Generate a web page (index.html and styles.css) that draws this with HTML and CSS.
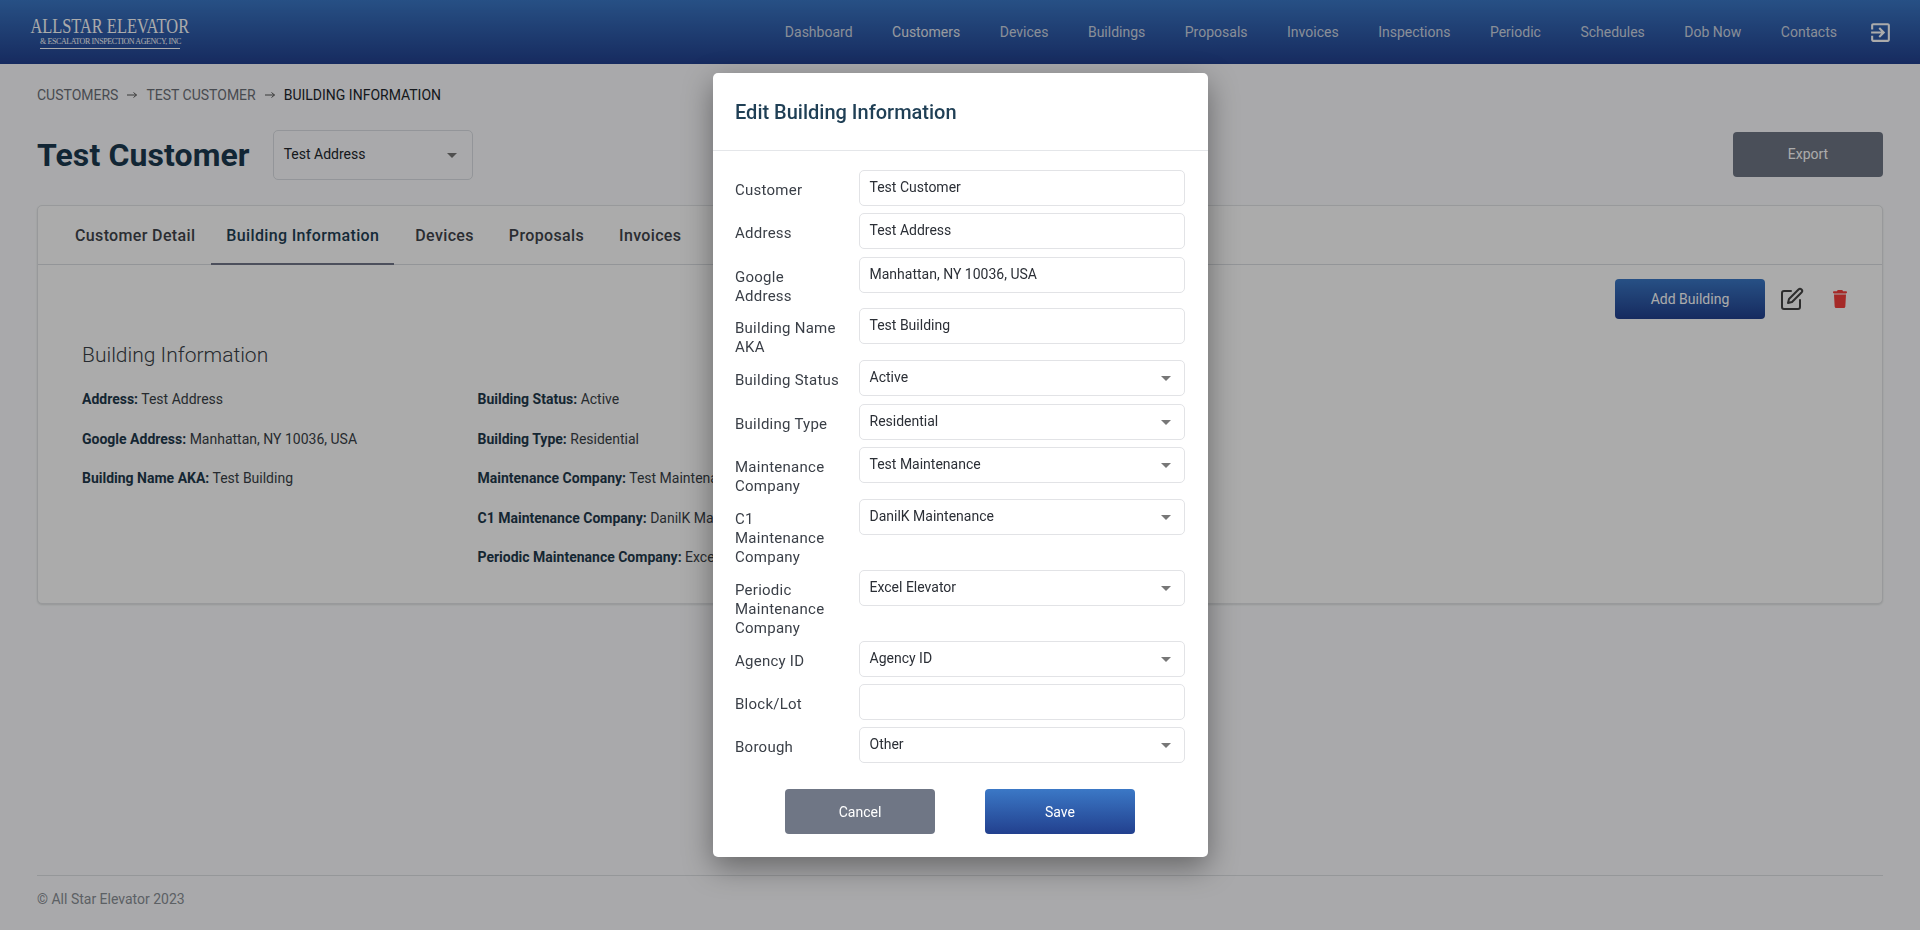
FILE: index.html
```html
<!DOCTYPE html>
<html lang="en">
<head>
    <meta charset="UTF-8">
    <title>Edit Building Information</title>
    <link rel="stylesheet" href="styles.css">
</head>
<body>
    <div class="page">
        <header class="topbar">
            <a class="logo">
                <span class="logo-main">ALLSTAR ELEVATOR</span>
                <span class="logo-sub">&amp; ESCALATOR INSPECTION AGENCY, INC</span>
            </a>
            <nav class="nav">
                <a>Dashboard</a>
                <a class="active">Customers</a>
                <a>Devices</a>
                <a>Buildings</a>
                <a>Proposals</a>
                <a>Invoices</a>
                <a>Inspections</a>
                <a>Periodic</a>
                <a>Schedules</a>
                <a>Dob Now</a>
                <a>Contacts</a>
                <svg class="logout" viewBox="0 0 24 24"><path d="M10.09 15.59L11.5 17l5-5-5-5-1.41 1.41L12.67 11H3v2h9.67l-2.58 2.59zM19 3H5c-1.11 0-2 .9-2 2v4h2V5h14v14H5v-4H3v4c0 1.1.89 2 2 2h14c1.1 0 2-.9 2-2V5c0-1.1-.9-2-2-2z"/></svg>
            </nav>
        </header>

        <main class="content">
            <div class="crumbs">
                <span>Customers</span>
                <svg class="crumb-arrow" viewBox="0 0 10 10"><path d="M0 5H9.5M6.5 2.5L9.5 5L6.5 7.5"/></svg>
                <span>Test Customer</span>
                <svg class="crumb-arrow" viewBox="0 0 10 10"><path d="M0 5H9.5M6.5 2.5L9.5 5L6.5 7.5"/></svg>
                <span class="current">Building Information</span>
            </div>
            <div class="title-row">
                <h1>Test Customer</h1>
                <div class="picker">Test Address<b class="caret"></b></div>
                <button class="btn btn-grey btn-export">Export</button>
            </div>
            <section class="card">
                <div class="tabs">
                    <a>Customer Detail</a>
                    <a class="active">Building Information</a>
                    <a>Devices</a>
                    <a>Proposals</a>
                    <a>Invoices</a>
                </div>
                <div class="card-body">
                    <div class="actions">
                        <button class="btn btn-blue btn-add">Add Building</button>
                        <svg class="icon-edit" viewBox="0 0 24 24"><path d="M11 4H4a2 2 0 0 0-2 2v14a2 2 0 0 0 2 2h14a2 2 0 0 0 2-2v-7"/><path d="M18.5 2.5a2.12 2.12 0 0 1 3 3L12 15l-4 1 1-4 9.5-9.5z"/></svg>
                        <svg class="icon-trash" viewBox="0 0 448 512" preserveAspectRatio="none"><path d="M135.2 17.7L128 32H32C14.3 32 0 46.3 0 64S14.3 96 32 96H416c17.7 0 32-14.3 32-32s-14.3-32-32-32H320l-7.2-14.3C307.4 6.8 296.3 0 284.2 0H163.8c-12.1 0-23.2 6.8-28.6 17.7zM416 128H32L53.2 467c1.6 25.3 22.6 45 47.9 45H346.9c25.3 0 46.3-19.7 47.9-45L416 128z"/></svg>
                    </div>
                    <h2>Building Information</h2>
                    <div class="info">
                        <div class="info-col">
                            <p><b>Address:</b> Test Address</p>
                            <p><b>Google Address:</b> Manhattan, NY 10036, USA</p>
                            <p><b>Building Name AKA:</b> Test Building</p>
                        </div>
                        <div class="info-col">
                            <p><b>Building Status:</b> Active</p>
                            <p><b>Building Type:</b> Residential</p>
                            <p><b>Maintenance Company:</b> Test Maintenance</p>
                            <p><b>C1 Maintenance Company:</b> DanilK Maintenance</p>
                            <p><b>Periodic Maintenance Company:</b> Excel Elevator</p>
                        </div>
                    </div>
                </div>
            </section>
        </main>

        <footer class="footer">© All Star Elevator 2023</footer>
    </div>

    <div class="overlay"></div>

    <div class="modal">
        <div class="modal-title">Edit Building Information</div>
        <form class="modal-form">
            <div class="row"><label>Customer</label><div class="field">Test Customer</div></div>
            <div class="row"><label>Address</label><div class="field">Test Address</div></div>
            <div class="row"><label>Google Address</label><div class="field">Manhattan, NY 10036, USA</div></div>
            <div class="row"><label>Building Name AKA</label><div class="field">Test Building</div></div>
            <div class="row"><label>Building Status</label><div class="field">Active<b class="caret"></b></div></div>
            <div class="row"><label>Building Type</label><div class="field">Residential<b class="caret"></b></div></div>
            <div class="row"><label>Maintenance Company</label><div class="field">Test Maintenance<b class="caret"></b></div></div>
            <div class="row"><label>C1 Maintenance Company</label><div class="field">DanilK Maintenance<b class="caret"></b></div></div>
            <div class="row"><label>Periodic Maintenance Company</label><div class="field">Excel Elevator<b class="caret"></b></div></div>
            <div class="row"><label>Agency ID</label><div class="field">Agency ID<b class="caret"></b></div></div>
            <div class="row"><label>Block/Lot</label><div class="field"></div></div>
            <div class="row"><label>Borough</label><div class="field">Other<b class="caret"></b></div></div>
            <div class="modal-buttons">
                <button type="button" class="btn btn-grey">Cancel</button>
                <button type="button" class="btn btn-blue">Save</button>
            </div>
        </form>
    </div>
</body>
</html>
```

FILE: styles.css
```css
* {
    box-sizing: border-box;
}
body {
    margin: 0;
    background: #fcfdff;
    font-family: Roboto, Arial, sans-serif;
    font-size: 14px;
    color: #3a3f47;
}
p, h1, h2 {
    margin: 0;
}
.page {
    display: flex;
    flex-direction: column;
    height: 930px;
    overflow: hidden;
}

/* top bar */
.topbar {
    height: 64px;
    flex: none;
    display: flex;
    align-items: center;
    justify-content: space-between;
    padding: 0 27px 0 31px;
    background: linear-gradient(180deg, #3b78c6 0%, #22408e 100%);
}
.logo {
    display: flex;
    flex-direction: column;
    align-items: center;
    width: 158px;
    font-family: "Liberation Serif", serif;
    color: #fff;
    white-space: nowrap;
    margin-top: 0;
}
.logo-main {
    font-size: 21px;
    line-height: 20px;
    transform: scaleX(0.78);
}
.logo-sub {
    margin-top: 1px;
    width: 140px;
    font-size: 8px;
    line-height: 10px;
    padding-bottom: 1px;
    border-bottom: 1px solid #fff;
    letter-spacing: -0.4px;
    text-align: center;
}
.nav {
    display: flex;
    align-items: center;
    gap: 39.5px;
    color: #cdd5e2;
}
.nav a.active {
    color: #e2e6ee;
}
.logout {
    width: 25px;
    height: 25px;
    margin-left: -8.5px;
    fill: #fff;
}

/* page content */
.content {
    padding: 22px 37px 0;
}
.crumbs {
    display: flex;
    align-items: center;
    height: 18px;
    text-transform: uppercase;
    color: #6c7078;
}
.crumb-arrow {
    width: 10px;
    height: 10px;
    margin: 0 9px;
    fill: none;
    stroke: #555;
    stroke-width: 1;
}
.crumbs .current {
    color: #22262c;
}
.title-row {
    display: flex;
    align-items: center;
    height: 50px;
    margin-top: 26px;
}
h1 {
    font-size: 32px;
    font-weight: 700;
    letter-spacing: 0.1px;
    color: #1b3a4f;
}
.picker {
    position: relative;
    width: 200px;
    height: 50px;
    margin-left: 23px;
    padding: 15px 10px 0;
    border: 1px solid #dcdfe4;
    border-radius: 5px;
    color: #22262c;
}
.picker .caret {
    right: 15px;
}
.btn {
    width: 150px;
    height: 45px;
    border: none;
    border-radius: 4px;
    font-family: inherit;
    font-size: 14px;
    color: #fff;
}
.btn-grey {
    background: #6f7685;
}
.btn-blue {
    background: linear-gradient(180deg, #3b78c6 0%, #22408e 100%);
}
.btn-export {
    margin-left: auto;
    margin-bottom: 2px;
}
.caret {
    position: absolute;
    right: 13px;
    top: 50%;
    margin-top: -2px;
    border-left: 5px solid transparent;
    border-right: 5px solid transparent;
    border-top: 5px solid #777;
}

/* card with tabs */
.card {
    margin-top: 25px;
    height: 399px;
    background: #fff;
    border: 1px solid #e3e5e8;
    border-radius: 5px;
    box-shadow: 0 1px 2px rgba(0, 0, 0, 0.12);
}
.tabs {
    display: flex;
    gap: 5px;
    height: 59px;
    padding-left: 22px;
    border-bottom: 1px solid #dcdfe3;
}
.tabs a {
    display: flex;
    align-items: center;
    height: 59px;
    padding: 0 15px;
    font-size: 16px;
    font-weight: 500;
    letter-spacing: 0.35px;
    color: #3f444b;
}
.tabs a.active {
    margin: 0 1px 0 -4px;
    color: #1f3f55;
    box-shadow: inset 0 -2px 0 #727789;
}
.card-body {
    padding: 14px 35px 0 44px;
}
.actions {
    display: flex;
    align-items: center;
    justify-content: flex-end;
}
.btn-add {
    height: 40px;
}
.icon-edit {
    width: 24px;
    height: 24px;
    margin-left: 15px;
    fill: none;
    stroke: #444;
    stroke-width: 2;
    stroke-linecap: round;
    stroke-linejoin: round;
}
.icon-trash {
    width: 14px;
    height: 18px;
    margin-left: 29px;
    fill: #f63f3c;
}
h2 {
    margin-top: 22px;
    font-size: 21px;
    line-height: 28px;
    font-weight: 300;
    color: #3a3f47;
}
.info {
    display: flex;
    margin-top: 22px;
}
.info-col {
    display: flex;
    flex-direction: column;
    gap: 23px;
    width: 395.5px;
}
.info-col p {
    line-height: 16.5px;
}
.info-col b {
    font-weight: 700;
    color: #1f3a4c;
}

/* footer */
.footer {
    margin: auto 37px 0;
    height: 55px;
    padding-top: 15px;
    border-top: 1px solid #dfe1e4;
    color: #8a8f96;
}

/* dark layer and dialog */
.overlay {
    position: fixed;
    top: 0;
    left: 0;
    right: 0;
    bottom: 0;
    background: rgba(0, 0, 0, 0.33);
}
.modal {
    position: absolute;
    top: 73px;
    left: 713px;
    width: 495px;
    height: 784px;
    background: #fff;
    border-radius: 5px;
    box-shadow: 0 10px 30px rgba(0, 0, 0, 0.4);
}
.modal-title {
    height: 78px;
    padding: 27px 22px 0;
    border-bottom: 1px solid #e4e6e9;
    font-size: 20px;
    line-height: 24px;
    font-weight: 500;
    color: #1f3f55;
}
.modal-form {
    padding: 19px 23px 0 22px;
}
.row {
    display: flex;
    align-items: flex-start;
    min-height: 43.3px;
}
.row label {
    width: 124px;
    flex: none;
    padding: 11px 17px 2.9px 0;
    font-size: 15px;
    line-height: 19px;
    letter-spacing: 0.25px;
    color: #3a3f47;
}
.field {
    position: relative;
    flex: 1;
    height: 36px;
    padding: 7px 9.5px 0;
    border: 1px solid #e2e3e6;
    border-radius: 5px;
    line-height: 18px;
    color: #2b2f36;
}
.modal-buttons {
    display: flex;
    justify-content: center;
    gap: 50px;
    margin-top: 18.5px;
}
```
